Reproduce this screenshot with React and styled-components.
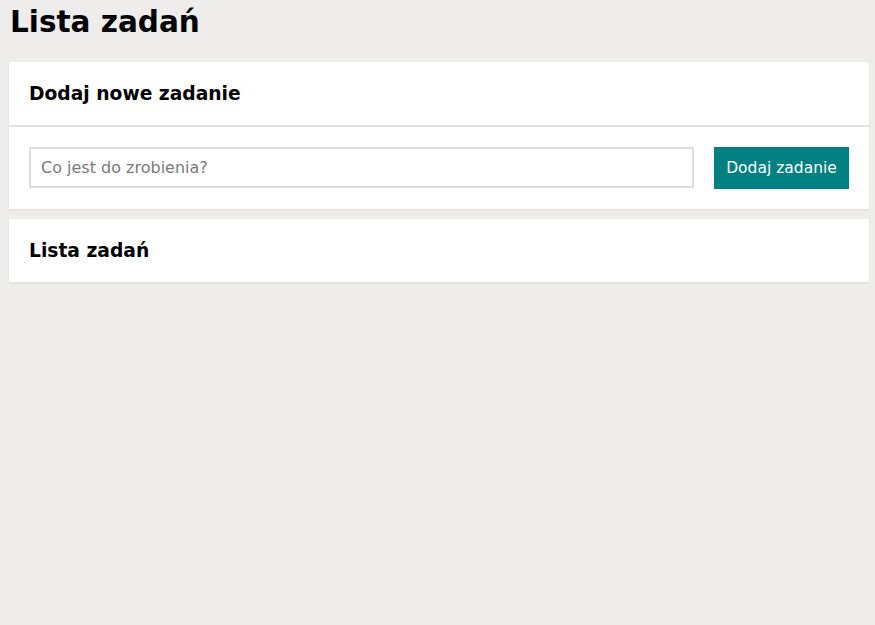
import React, { useState } from 'react';
import styled, { createGlobalStyle } from 'styled-components';

const GlobalStyle = createGlobalStyle`
    html, body {
        margin: 0;
        background: #eeedeb;
        font-family: 'DejaVu Sans', 'Noto Sans', sans-serif;
    }
`

const App = () => {
    const [task, setTask] = useState('');

    return (
        <>
            <GlobalStyle />
            <Main>
                <Title>Lista zadań</Title>
                <Section>
                    <SectionHeader>
                        <SectionTitle>Dodaj nowe zadanie</SectionTitle>
                    </SectionHeader>
                    <Form onSubmit={e => e.preventDefault()}>
                        <Input
                            value={task}
                            onChange={e => setTask(e.target.value)}
                            placeholder="Co jest do zrobienia?"
                        />
                        <Button type="submit">Dodaj zadanie</Button>
                    </Form>
                </Section>
                <Section>
                    <SectionHeader last>
                        <SectionTitle>Lista zadań</SectionTitle>
                    </SectionHeader>
                </Section>
            </Main>
        </>
    )
}

const Main = styled.main`
    padding: 4px 6px 0 9px;
`

const Title = styled.h1`
    margin: 0 0 22px 1px;
    font-size: 29.5px;
    line-height: 36px;
    font-weight: 700;
    color: #000;
`

const Section = styled.section`
    background: #fff;
    margin-bottom: 10px;
    box-shadow: 0 1px 2px #dcdcdc;
`

const SectionHeader = styled.div`
    padding: 20px;
    border-bottom: ${({ last }) => last ? 'none' : '2px solid #e0e0e0'};
`

const SectionTitle = styled.h2`
    margin: 0;
    font-size: 18.7px;
    font-weight: 700;
    line-height: 23px;
`

const Form = styled.form`
    display: flex;
    gap: 20px;
    padding: 20px;
`

const Input = styled.input`
    flex: 1;
    height: 41px;
    box-sizing: border-box;
    border: 2px solid #dddddd;
    padding: 0 10px;
    font-family: inherit;
    font-size: 16px;
    outline: none;
    &::placeholder {
        color: #7a7a7a;
    }
`

const Button = styled.button`
    width: 135px;
    height: 42px;
    border: none;
    background: #008080;
    color: #fff;
    font-family: inherit;
    font-size: 15.5px;
    cursor: pointer;
`

export default App
